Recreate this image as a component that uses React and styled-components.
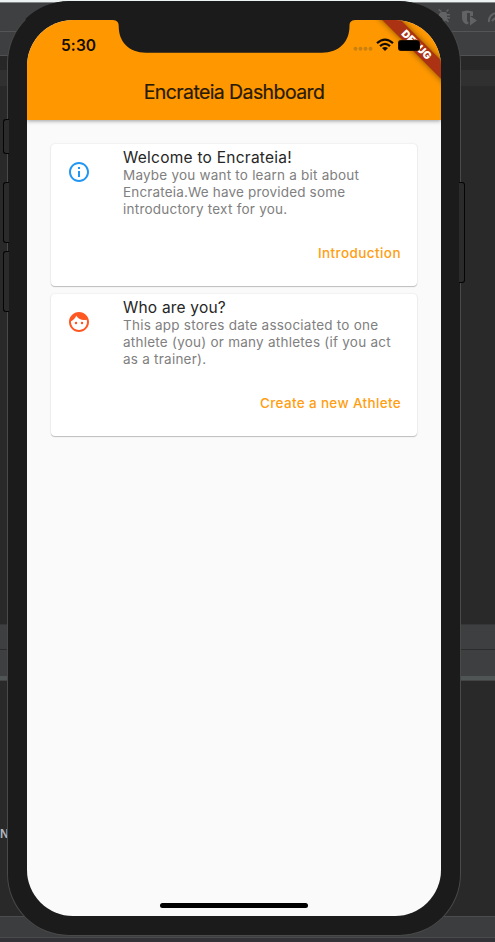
import React from "react";
import styled, { createGlobalStyle } from "styled-components";
import { MdInfoOutline, MdFace } from "react-icons/md";

const GlobalStyle = createGlobalStyle`
  * { box-sizing: border-box; }
  body { margin: 0; background: #282828; overflow: hidden; }
`;

const Desktop = styled.div`
  position: relative;
  width: 495px;
  height: 942px;
  overflow: hidden;
  display: flex;
  flex-direction: column;
  font-family: Inter, "Noto Sans", sans-serif;
`;

const Strip = styled.div`
  flex: none;
  height: ${(p) => p.$h}px;
  background: ${(p) => p.$bg};
`;

const Toolbar = styled(Strip)`
  display: flex;
  justify-content: flex-end;
  padding: 4px 0 0;
  color: #616365;
  overflow: hidden;
`;

const ToolbarIcons = styled.svg`
  width: 60px;
  height: 22px;
`;

const Console = styled(Strip)`
  padding-top: 146px;
  color: #b4b4b4;
  font: bold 12px/14px "Liberation Sans", sans-serif;
`;

const SideButton = styled.div`
  position: absolute;
  left: ${(p) => p.$x}px;
  top: ${(p) => p.$y}px;
  width: 6px;
  height: ${(p) => p.$h}px;
  background: #2b2b2b;
  border: 1px solid #050505;
  border-radius: ${(p) => (p.$right ? "0 3px 3px 0" : "3px 0 0 3px")};
  border-${(p) => (p.$right ? "left" : "right")}: 0;
`;

const Phone = styled.div`
  position: absolute;
  left: 7px;
  top: 1px;
  width: 454px;
  height: 935px;
  padding: 18px 19px;
  border: 1px solid #494949;
  border-top-color: #1b1b1b;
  border-radius: 62px;
  background: #1b1b1b;
`;

const Screen = styled.main`
  position: relative;
  width: 414px;
  height: 896px;
  border-radius: 46px;
  background: #fafafa;
  overflow: hidden;
  display: flex;
  flex-direction: column;
`;

const AppBar = styled.header`
  flex: none;
  height: 100px;
  background: #ff9800;
  box-shadow: 0 1px 4px rgba(0, 0, 0, 0.38);
  display: flex;
  flex-direction: column;
`;

const StatusBar = styled.div`
  height: 44px;
  padding: 15px 17px 0 34px;
  display: flex;
  justify-content: space-between;
`;

const Time = styled.span`
  font-size: 15.5px;
  line-height: 21px;
  font-weight: 600;
  letter-spacing: 0.1px;
  color: #130c00;
`;

const StatusIcons = styled.svg`
  width: 72px;
  height: 20px;
`;

const Title = styled.h1`
  margin: 16px 0 0;
  text-align: center;
  font-size: 19.5px;
  line-height: 24px;
  font-weight: 400;
  letter-spacing: -0.6px;
  color: #291a04;
  -webkit-text-stroke: 0.2px #291a04;
`;

const Notch = styled.svg`
  position: absolute;
  left: 84px;
  top: -1px;
  width: 246px;
  height: 35px;
`;

const Ribbon = styled.div`
  position: absolute;
  top: 17px;
  right: -29px;
  width: 110px;
  height: 13px;
  padding-left: 4px;
  transform: rotate(45deg);
  background: #ab3212;
  box-shadow: 0 0 6px rgba(0, 0, 0, 0.5);
  color: #fff;
  font-size: 10.6px;
  line-height: 13px;
  font-weight: 900;
  letter-spacing: 0.1px;
  text-align: center;
`;

const Battery = styled.div`
  position: absolute;
  left: 371px;
  top: 20px;
  width: 22px;
  height: 11px;
  border: 1px solid rgba(60, 30, 0, 0.5);
  border-radius: 3px;
  background: #000;
`;

const CardList = styled.section`
  flex: 1;
  padding: 24px;
  display: flex;
  flex-direction: column;
  gap: 8px;
`;

const Card = styled.article`
  width: 366px;
  height: 142px;
  background: #fff;
  border-radius: 4px;
  box-shadow: 0 1px 1px rgba(0, 0, 0, 0.22), 0 0 2px rgba(0, 0, 0, 0.12);
  display: flex;
  flex-direction: column;
`;

const Tile = styled.div`
  height: 93px;
  padding: 4px 16px 0;
  display: grid;
  grid-template-columns: 56px 1fr;
`;

const TileIcon = styled.div`
  padding-top: 12px;
  color: ${(p) => p.$color};
  svg { display: block; width: 24px; height: 24px; }
`;

const CardTitle = styled.h2`
  margin: 0 0 -1px;
  font-size: 15.5px;
  line-height: 20px;
  font-weight: 400;
  letter-spacing: ${(p) => p.$ls}px;
  color: #262626;
`;

const Line = styled.span`
  display: block;
  height: 17px;
  font-size: 13.5px;
  line-height: 17px;
  letter-spacing: ${(p) => p.$ls}px;
  color: #808080;
  white-space: nowrap;
`;

const CardAction = styled.button`
  align-self: flex-end;
  margin: 7px 16px 0 0;
  padding: 0;
  border: 0;
  background: none;
  font-family: inherit;
  font-size: 13.5px;
  line-height: 19px;
  font-weight: 500;
  letter-spacing: ${(p) => p.$ls}px;
  color: #ff9e10;
`;

const HomeIndicator = styled.div`
  flex: none;
  align-self: center;
  width: 148px;
  height: 5px;
  margin-bottom: 8px;
  border-radius: 3px;
  background: #000;
`;

const cards = [
  {
    title: "Welcome to Encrateia!", titleLs: 0.25, color: "#2196f3", Icon: MdInfoOutline,
    lines: [["Maybe you want to learn a bit about", 0.21], ["Encrateia.We have provided some", 0.17], ["introductory text for you.", 0.24]],
    action: "Introduction", actionLs: 0.42,
  },
  {
    title: "Who are you?", titleLs: 0.2, color: "#ff5722", Icon: MdFace,
    lines: [["This app stores date associated to one", 0.23], ["athlete (you) or many athletes (if you act", 0.24], ["as a trainer).", 0.24]],
    action: "Create a new Athlete", actionLs: 0.34,
  },
];

export default function App() {
  return (
    <>
      <GlobalStyle />
      <Desktop>
        <Strip $h={2} $bg="#edf3f2" />
        <Strip $h={1} $bg="#858788" />
        <Toolbar $h={28} $bg="#3e4042">
          <ToolbarIcons viewBox="0 0 60 22" fill="currentColor">
            <path d="M6 5h5l1 2h3v1.500h-3v1.500h3v1.500h-3l2 3-1 1-2-2-2 2H7l-3-3-3 2V13l3-2v-1H1V8.500h3V7zM4 2l3 2-1 1-3-2zm9 0 1 1-2 2-1-1z" />
            <path d="M27 4.500 32 3.500l6 1V9h-3V6h-3v8l2 2-2 1.500c-4-1.500-5-4-5-8zM35 9l7 4.500-7 5z" />
            <path d="M54 15a8 8 0 0 1 8-9M57 14l3-3" fill="none" stroke="currentColor" strokeWidth="2" />
          </ToolbarIcons>
        </Toolbar>
        <Strip $h={1} $bg="#535557" />
        <Strip $h={23} $bg="#3d3f41" />
        <Strip $h={1} $bg="#515151" />
        <Strip $h={14} $bg="#272727" />
        <Strip $h={16} $bg="#303030" />
        <Strip $h={538} $bg="#292929" />
        <Strip $h={1} $bg="#363636" />
        <Strip $h={24} $bg="#3d3f41" />
        <Strip $h={1} $bg="#2c2c2c" />
        <Strip $h={26} $bg="#3d3f41" />
        <Strip $h={4} $bg="#505555" />
        <Strip $h={1} $bg="#444" />
        <Console $h={235} $bg="#292929">N</Console>
        <Strip $h={1} $bg="#4c4c4c" />
        <Strip $h={20} $bg="#3b3d3f" />
        <Strip $h={1} $bg="#4b4b4b" />
        <Strip $h={4} $bg="#333236" />

        <Phone>
          <Screen>
            <AppBar>
              <StatusBar>
                <Time>5:30</Time>
                <StatusIcons viewBox="0 0 72 20">
                  <g fill="#c98110">
                    <circle cx="3.500" cy="13.700" r="2" /><circle cx="8.500" cy="13.700" r="2" />
                    <circle cx="13.500" cy="13.700" r="2" /><circle cx="18.500" cy="13.700" r="2" />
                  </g>
                  <g fill="none" stroke="#110b00" strokeWidth="2.200">
                    <path d="M25 8.100q8-7 16 0M28 11.100q5-4.400 10 0" />
                  </g>
                  <path d="M30 13.100q3-2.300 6 0l-3 2.900z" fill="#110b00" />
                </StatusIcons>
              </StatusBar>
              <Title>Encrateia Dashboard</Title>
            </AppBar>
            <CardList>
              {cards.map(({ title, titleLs, color, Icon, lines, action, actionLs }) => (
                <Card key={title}>
                  <Tile>
                    <TileIcon $color={color}><Icon /></TileIcon>
                    <div>
                      <CardTitle $ls={titleLs}>{title}</CardTitle>
                      {lines.map(([text, ls]) => <Line key={text} $ls={ls}>{text}</Line>)}
                    </div>
                  </Tile>
                  <CardAction $ls={actionLs}>{action}</CardAction>
                </Card>
              ))}
            </CardList>
            <HomeIndicator />
            <Notch viewBox="0 0 246 35">
              <path d="M0 0H246V1C241 1 238.500 2 238.500 7C238.500 23 228 33.700 211 33.700H35C18 33.700 7.700 23 7.700 7C7.700 2 5 1 0 1Z" fill="#1b1b1b" />
            </Notch>
            <Ribbon>DEBUG</Ribbon>
            <Battery />
          </Screen>
        </Phone>
        <SideButton $x={3} $y={119} $h={35} />
        <SideButton $x={3} $y={182} $h={61} />
        <SideButton $x={3} $y={251} $h={61} />
        <SideButton $x={459} $y={182} $h={101} $right />
      </Desktop>
    </>
  );
}
